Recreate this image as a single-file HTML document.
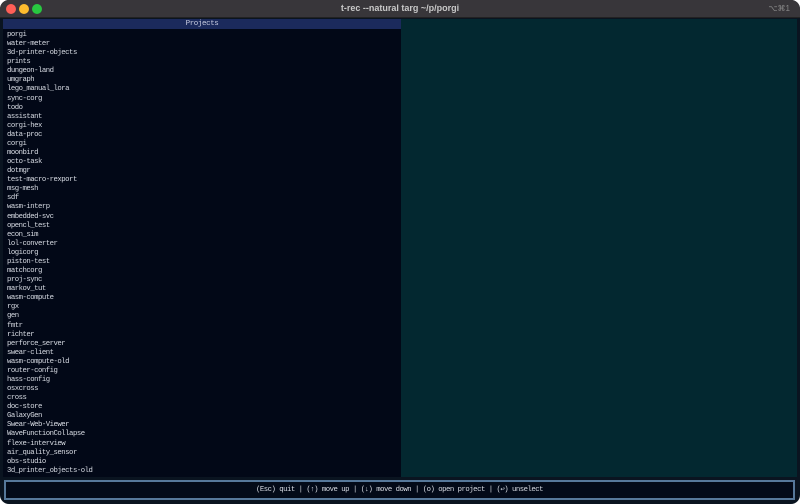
<!DOCTYPE html>
<html><head><style>
*{margin:0;padding:0;box-sizing:border-box}
body{width:800px;height:504px;background:#fff;overflow:hidden;font-family:"Liberation Mono",monospace}
.win{position:absolute;left:0;top:0;width:800px;height:504px;background:#0a1420;border-radius:9px;overflow:hidden}
.tb{position:absolute;left:0;top:0;width:800px;height:18px;background:#38363a;border-bottom:1px solid #222}
.dot{position:absolute;top:4px;width:10px;height:10px;border-radius:50%}
.title{position:absolute;left:0;width:800px;top:3px;text-align:center;color:#c8c8c8;font:bold 9px "Liberation Sans",sans-serif}
.kb{position:absolute;right:10px;top:4px;color:#888;font:8px "Liberation Sans",sans-serif}
.left{position:absolute;left:3px;top:19px;width:398px;height:458px;background:#020817}
.hdr{height:10px;background:#1b2a5c;color:#c8cce0;font-size:7.5px;text-align:center;line-height:10px;letter-spacing:-0.4px}
.list{padding:2px 0 0 4px;color:#d8dce4;font-size:7.3px;line-height:9.08px;letter-spacing:-0.5px}
.right{position:absolute;left:401px;top:19px;width:396px;height:458px;background:#032830}
.bar{position:absolute;left:4px;top:480px;width:791px;height:20px;border:2px solid #56789a;background:#030a18;color:#d8dce4;font-size:7.3px;text-align:center;line-height:16px;letter-spacing:-0.5px}
</style></head><body><div class="win">
<div class="tb"><div class="dot" style="left:6px;background:#fe5f57"></div><div class="dot" style="left:19px;background:#febc2e"></div><div class="dot" style="left:32px;background:#28c840"></div>
<div class="title">t-rec --natural targ ~/p/porgi</div><div class="kb">⌥⌘1</div></div>
<div class="left"><div class="hdr">Projects</div><div class="list">porgi<br>water-meter<br>3d-printer-objects<br>prints<br>dungeon-land<br>umgraph<br>lego_manual_lora<br>sync-corg<br>todo<br>assistant<br>corgi-hex<br>data-proc<br>corgi<br>moonbird<br>octo-task<br>dotmgr<br>test-macro-rexport<br>msg-mesh<br>sdf<br>wasm-interp<br>embedded-svc<br>opencl_test<br>econ_sim<br>lol-converter<br>logicorg<br>piston-test<br>matchcorg<br>proj-sync<br>markov_tut<br>wasm-compute<br>rgx<br>gen<br>fmtr<br>richter<br>perforce_server<br>swear-client<br>wasm-compute-old<br>router-config<br>hass-config<br>osxcross<br>cross<br>doc-store<br>GalaxyGen<br>Swear-Web-Viewer<br>WaveFunctionCollapse<br>flexe-interview<br>air_quality_sensor<br>obs-studio<br>3d_printer_objects-old</div></div>
<div class="right"></div>
<div class="bar">(Esc) quit | (↑) move up | (↓) move down | (o) open project | (↩) unselect</div>
</div></body></html>
